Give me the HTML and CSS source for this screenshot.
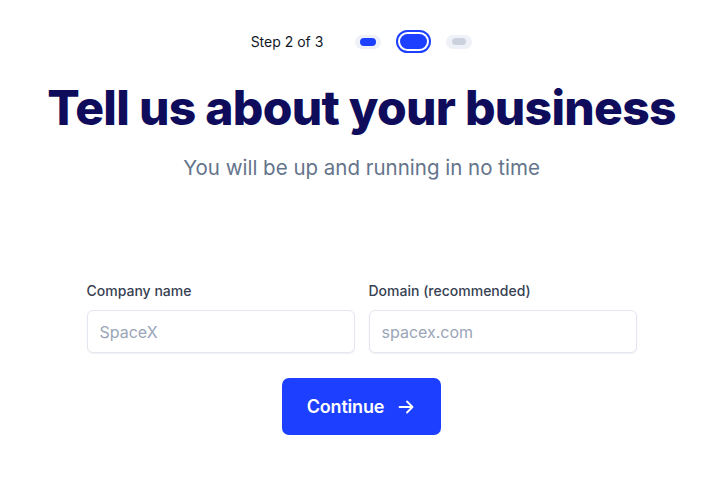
FILE: index.html
```html
<!DOCTYPE html>
<html lang="en">
<head>
<meta charset="utf-8">
<title>Tell us about your business</title>
<link rel="stylesheet" href="styles.css">
</head>
<body>
<main class="page">
  <div class="steps">
    <span class="steps-label">Step 2 of 3</span>
    <div class="dots">
      <span class="dot dot-done"><span class="dot-inner"></span></span>
      <span class="dot dot-current"><span class="dot-inner"></span></span>
      <span class="dot dot-todo"><span class="dot-inner"></span></span>
    </div>
  </div>
  <h1 class="title">Tell us about your business</h1>
  <p class="subtitle">You will be up and running in no time</p>
  <form class="form">
    <div class="fields">
      <label class="field">
        <span class="field-label">Company name</span>
        <input class="input" type="text" placeholder="SpaceX">
      </label>
      <label class="field">
        <span class="field-label">Domain (recommended)</span>
        <input class="input" type="text" placeholder="spacex.com">
      </label>
    </div>
    <button class="btn" type="button">Continue
      <svg class="btn-icon" width="20" height="20" viewBox="0 0 20 20" fill="none" stroke="currentColor" stroke-width="1.8" stroke-linecap="round" stroke-linejoin="round"><path d="M3.5 10h13M11 4.5l5.5 5.5-5.5 5.5"/></svg>
    </button>
  </form>
</main>
</body>
</html>
```

FILE: styles.css
```css
* { box-sizing: border-box; }
html, body { margin: 0; padding: 0; background: #fff; }
body { font-family: Inter, "Noto Sans", sans-serif; }
.page {
  padding-left: 21px;
  display: flex;
  flex-direction: column;
  align-items: center;
}
.steps {
  display: flex;
  align-items: center;
  gap: 32px;
  margin-top: 30px;
  height: 23px;
}
.steps-label {
  font-size: 14px;
  color: #111827;
  font-weight: 400;
}
.dots { display: flex; align-items: center; gap: 15px; }
.dot {
  display: flex;
  align-items: center;
  justify-content: center;
  border-radius: 999px;
}
.dot-done, .dot-todo {
  width: 26px; height: 14px;
  background: #eef2f8;
}
.dot-done .dot-inner {
  width: 16px; height: 8px; border-radius: 999px; background: #1d3fff;
}
.dot-todo .dot-inner {
  width: 14px; height: 7px; border-radius: 999px; background: #cbd2de;
}
.dot-current {
  width: 35px; height: 23px;
  border: 2px solid #1d3fff;
  background: #fff;
}
.dot-current .dot-inner {
  width: 27px; height: 15px; border-radius: 999px; background: #1d3fff;
}
.title {
  margin: 26px 0 0;
  font-size: 48px;
  line-height: 58px;
  font-weight: 800;
  letter-spacing: -0.015em;
  color: #0f0c5c;
}
.subtitle {
  margin: 17px 0 0;
  font-size: 20.5px;
  line-height: 28px;
  color: #64748b;
}
.form {
  margin-top: 99px;
  display: flex;
  flex-direction: column;
  align-items: center;
}
.fields {
  display: flex;
  gap: 14px;
}
.field {
  display: flex;
  flex-direction: column;
  gap: 9px;
  width: 268px;
}
.field-label {
  font-size: 14px;
  line-height: 20px;
  font-weight: 500;
  color: #374151;
}
.input {
  height: 43px;
  border: 1px solid #e3e7ef;
  border-radius: 6px;
  padding: 0 12px;
  font-family: inherit;
  font-size: 16px;
  color: #111827;
  box-shadow: 0 1px 2px rgba(15, 23, 42, 0.06);
  outline: none;
}
.input::placeholder { color: #9aa5b8; }
.btn {
  margin-top: 25px;
  width: 159px;
  height: 57px;
  border: none;
  border-radius: 7px;
  background: #1d3fff;
  color: #fff;
  font-family: inherit;
  font-size: 18px;
  font-weight: 600;
  letter-spacing: -0.01em;
  display: flex;
  align-items: center;
  justify-content: center;
  gap: 12px;
  cursor: pointer;
}
.btn-icon { display: block; }
```
